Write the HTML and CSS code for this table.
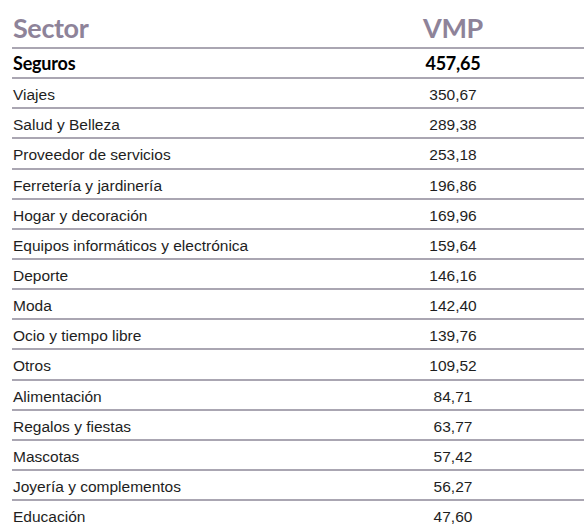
FILE: index.html
```html
<!DOCTYPE html>
<html lang="es">
<head>
<meta charset="utf-8">
<link rel="stylesheet" href="styles.css">
</head>
<body>
<div class="table">
  <div class="row head"><div class="name">Sector</div><div class="val">VMP</div></div>
  <div class="row top"><div class="name">Seguros</div><div class="val">457,65</div></div>
  <div class="row"><div class="name">Viajes</div><div class="val">350,67</div></div>
  <div class="row"><div class="name">Salud y Belleza</div><div class="val">289,38</div></div>
  <div class="row"><div class="name">Proveedor de servicios</div><div class="val">253,18</div></div>
  <div class="row"><div class="name">Ferretería y jardinería</div><div class="val">196,86</div></div>
  <div class="row"><div class="name">Hogar y decoración</div><div class="val">169,96</div></div>
  <div class="row"><div class="name">Equipos informáticos y electrónica</div><div class="val">159,64</div></div>
  <div class="row"><div class="name">Deporte</div><div class="val">146,16</div></div>
  <div class="row"><div class="name">Moda</div><div class="val">142,40</div></div>
  <div class="row"><div class="name">Ocio y tiempo libre</div><div class="val">139,76</div></div>
  <div class="row"><div class="name">Otros</div><div class="val">109,52</div></div>
  <div class="row"><div class="name">Alimentación</div><div class="val">84,71</div></div>
  <div class="row"><div class="name">Regalos y fiestas</div><div class="val">63,77</div></div>
  <div class="row"><div class="name">Mascotas</div><div class="val">57,42</div></div>
  <div class="row"><div class="name">Joyería y complementos</div><div class="val">56,27</div></div>
  <div class="row last"><div class="name">Educación</div><div class="val">47,60</div></div>
</div>
</body>
</html>
```

FILE: styles.css
```css
html, body {
  margin: 0;
  padding: 0;
  background: #ffffff;
}
body {
  font-family: "Liberation Sans", Arial, sans-serif;
  color: #1e1e1e;
  overflow: hidden;
}
.table {
  margin-left: 12px;
  display: flex;
  flex-direction: column;
}
.row {
  display: grid;
  grid-template-columns: 310px 262px;
  height: 28.15px;
  border-bottom: 2px solid #aaa6b2;
  align-items: center;
  font-size: 15.5px;
}
.row .name, .row .val {
  padding-top: 4px;
}
.row .name {
  padding-left: 1px;
}
.row .val {
  text-align: center;
}
.row.head {
  height: 47px;
  align-items: end;
  font-family: "Lato", "DejaVu Sans Condensed", sans-serif;
  font-weight: 700;
  font-size: 27px;
  letter-spacing: -0.4px;
  color: #8e8399;
  line-height: 1;
}
.row.head .name, .row.head .val {
  padding-top: 0;
  padding-bottom: 6px;
}
.row.top {
  font-family: "Lato", "DejaVu Sans Condensed", sans-serif;
  font-weight: 700;
  font-size: 18px;
  letter-spacing: -0.2px;
  color: #000;
}
.row.top .name, .row.top .val {
  padding-top: 0;
}
.row.last {
  border-bottom: none;
}
```
